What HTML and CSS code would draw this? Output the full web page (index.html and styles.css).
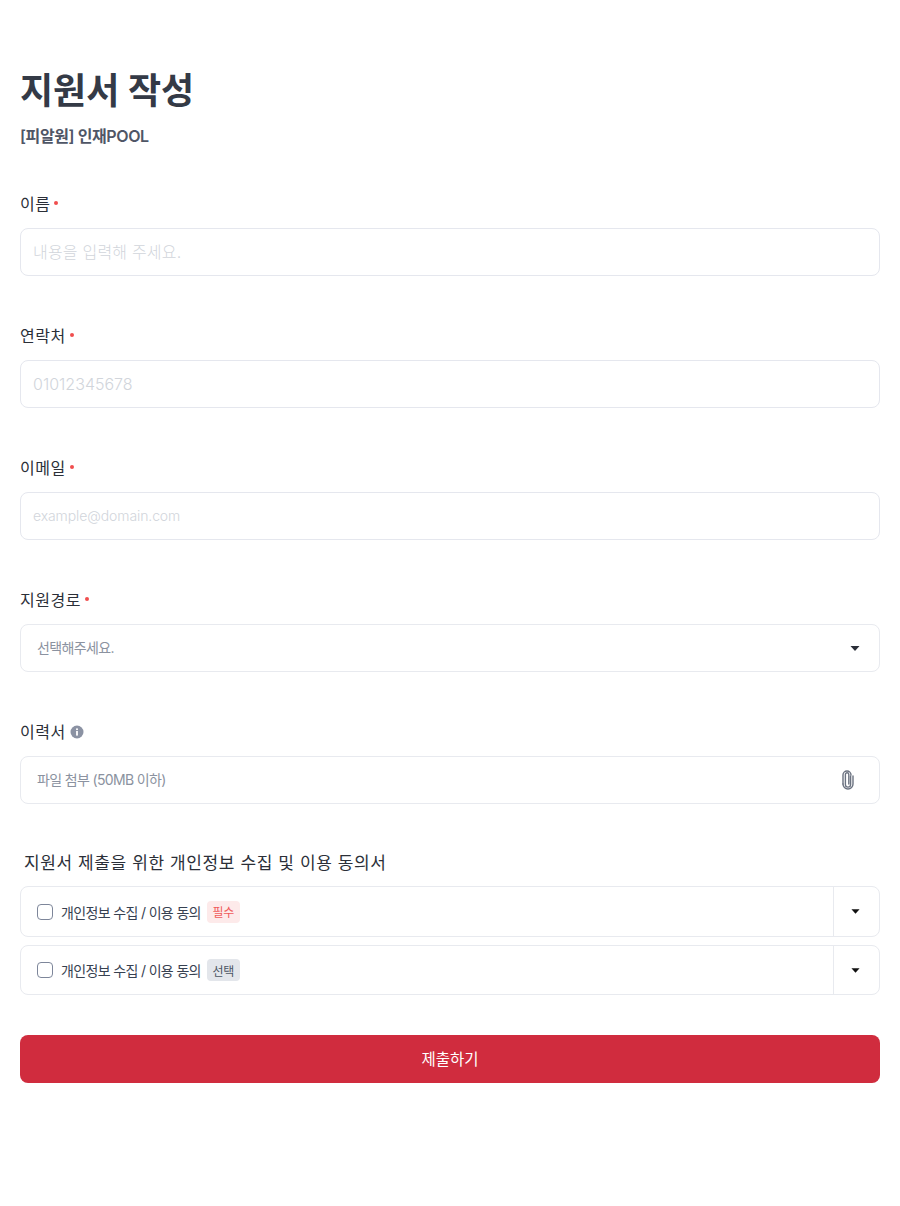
FILE: index.html
```html
<!DOCTYPE html>
<html lang="ko">
<head>
	<meta charset="UTF-8">
	<meta name="viewport" content="width=device-width,initial-scale=1.0">
	<title>지원서 작성</title>
	<link rel="stylesheet" href="styles.css">
</head>
<body>
	<form class="apply">
		<h1 class="title">지원서 작성</h1>
		<p class="subtitle">[피알원] 인재POOL</p>

		<div class="field">
			<label class="label">이름<span class="req"></span></label>
			<input class="input" type="text" placeholder="내용을 입력해 주세요.">
		</div>
		<div class="field">
			<label class="label">연락처<span class="req"></span></label>
			<input class="input input-num" type="text" placeholder="01012345678">
		</div>
		<div class="field">
			<label class="label">이메일<span class="req"></span></label>
			<input class="input input-small" type="text" placeholder="example@domain.com">
		</div>
		<div class="field">
			<label class="label">지원경로<span class="req"></span></label>
			<div class="box">
				<span class="box-text">선택해주세요.</span>
				<svg class="caret" width="10" height="5" viewBox="0 0 10 5"><path d="M0.5 0h9L5 5z"/></svg>
			</div>
		</div>
		<div class="field">
			<label class="label">이력서
				<svg class="info" width="14" height="14" viewBox="0 0 14 14"><circle cx="7" cy="7" r="6.5" fill="#8b92a3"/><rect x="6.1" y="6" width="1.8" height="4.6" fill="#fff"/><rect x="6.1" y="3.4" width="1.8" height="1.7" fill="#fff"/></svg>
			</label>
			<div class="box">
				<span class="box-text">파일 첨부 (50MB 이하)</span>
				<svg class="clip" width="14" height="20" viewBox="0 0 14 20" fill="none" stroke="#6b7280" stroke-width="1.4" stroke-linecap="round"><path d="M9.6 6v8.5a2.6 2.6 0 0 1-5.2 0V4.5a1.7 1.7 0 0 1 3.4 0V14"/><path d="M2 14V5a4 4 0 0 1 8 0"/><path d="M2 14a5 5 0 0 0 10 0V6"/></svg>
			</div>
		</div>

		<h2 class="consent-title">지원서 제출을 위한 개인정보 수집 및 이용 동의서</h2>
		<div class="consent">
			<div class="consent-row tall">
				<div class="consent-main">
					<input class="check" type="checkbox">
					<span class="consent-text">개인정보 수집 / 이용 동의</span>
					<span class="tag tag-red">필수</span>
				</div>
				<div class="consent-toggle"><svg class="caret dark" width="9" height="5" viewBox="0 0 10 5"><path d="M0.5 0h9L5 5z"/></svg></div>
			</div>
			<div class="consent-row">
				<div class="consent-main">
					<input class="check" type="checkbox">
					<span class="consent-text">개인정보 수집 / 이용 동의</span>
					<span class="tag tag-gray">선택</span>
				</div>
				<div class="consent-toggle"><svg class="caret dark" width="9" height="5" viewBox="0 0 10 5"><path d="M0.5 0h9L5 5z"/></svg></div>
			</div>
		</div>

		<button class="submit" type="button">제출하기</button>
	</form>
</body>
</html>
```

FILE: styles.css
```css
*{box-sizing:border-box;padding:0;margin:0;}
body{background:#fff;font-family:Inter,"Noto Sans CJK KR",sans-serif;color:#1f2937;}
.apply{padding:65px 20px 123px;}
.title{font-size:36px;line-height:52px;font-weight:700;color:#343a46;letter-spacing:0;}
.subtitle{margin-top:7px;font-size:16px;line-height:24px;font-weight:600;color:#4f5666;letter-spacing:-0.4px;}
.field{margin-bottom:48px;}
.subtitle + .field{margin-top:44px;}
.label{display:flex;align-items:center;height:24px;margin-bottom:12px;font-size:16px;line-height:24px;color:#2b2f38;letter-spacing:0.5px;}
.req{width:4px;height:4px;margin:-3px 0 0 4px;border-radius:50%;background:#f04e4e;}
.info{margin-left:4px;}
.input{display:block;width:100%;height:48px;padding:0 12px;border:1px solid #e5e7ee;border-radius:8px;font:300 16px Inter,"Noto Sans CJK KR",sans-serif;letter-spacing:0.2px;outline:0;}
.input-num{letter-spacing:0;}
.input-small{padding-bottom:2px;font-size:14px;letter-spacing:-0.1px;}
.input::placeholder{color:#d1d5db;opacity:1;}
.box{display:flex;align-items:center;justify-content:space-between;height:48px;padding:0 19px 0 16px;border:1px solid #e8eaef;border-radius:8px;}
.box-text{margin-bottom:2px;font-size:14px;color:#8b92a0;letter-spacing:-0.65px;}
.caret{fill:#2b2f38;}
.caret.dark{fill:#111;}
.clip{margin-right:5px;}
.consent-title{margin:-1px 0 11px 4px;font-size:17px;line-height:24px;font-weight:400;color:#2b2f38;letter-spacing:0.6px;}
.consent{display:flex;flex-direction:column;gap:8px;}
.consent-row{display:flex;height:50px;border:1px solid #e8eaef;border-radius:8px;}
.consent-row.tall{height:51px;}
.consent-main{flex:1;display:flex;align-items:center;padding-left:16px;}
.check{appearance:none;width:16px;height:16px;margin-right:8px;border:1px solid #7d869a;border-radius:4px;background:#fff;}
.consent-text{font-size:14px;color:#374151;letter-spacing:-0.65px;}
.tag{display:inline-flex;align-items:center;justify-content:center;width:33px;height:22px;margin-left:6px;border-radius:4px;font-size:12px;letter-spacing:-0.3px;}
.tag-red{background:#fdeaea;color:#f05a5a;}
.tag-gray{background:#e3e6eb;color:#4b5563;}
.consent-toggle{width:46px;padding-right:2px;display:flex;align-items:center;justify-content:center;border-left:1px solid #e8eaef;}
.submit{display:block;width:100%;height:48px;margin-top:40px;padding-bottom:2px;border:0;border-radius:8px;background:#d02c3e;color:#fff;font:15.5px Inter,"Noto Sans CJK KR",sans-serif;letter-spacing:0;}
```
